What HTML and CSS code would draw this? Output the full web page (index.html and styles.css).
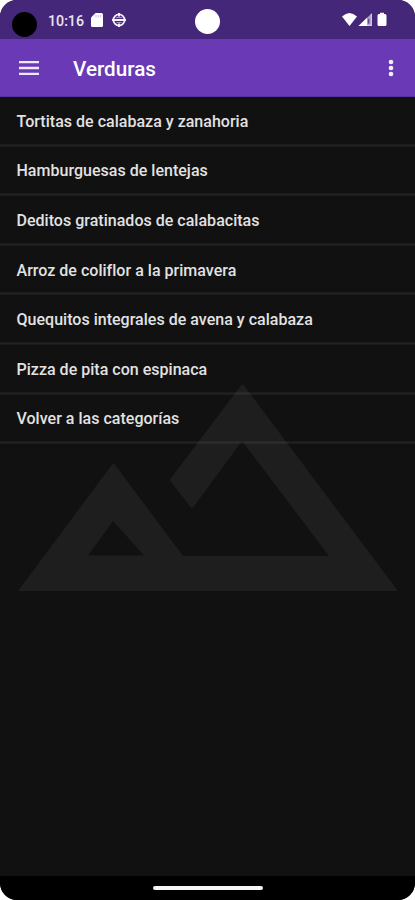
FILE: index.html
```html
<!DOCTYPE html>
<html lang="es">
<head>
<meta charset="utf-8">
<title>Verduras</title>
<link rel="stylesheet" href="styles.css">
</head>
<body>
<div class="phone">
  <header class="status">
    <span class="lens"></span>
    <span class="time">10:16</span>
    <svg class="sd" viewBox="0 0 12 14"><path d="M4.5 0H10.5Q12 0 12 1.5V12.5Q12 14 10.5 14H1.5Q0 14 0 12.5V4.5Z" fill="#fff"/><path d="M5 2v2.5M7.3 2v2.5M9.6 2v2.5" stroke="#b9adce" stroke-width=".8"/></svg>
    <svg class="globe" viewBox="0 0 14 14" fill="none" stroke="#f4effa"><circle cx="7" cy="7" r="5.600" stroke-width="1.800"/><path d="M0 7H14" stroke-width="2"/><path d="M4 4.600H10M4.500 9.500H9.500" stroke-width="1" opacity=".6"/><path d="M7 0V3.500M7 10.500V14" stroke-width="2"/></svg>
    <span class="camera"></span>
    <svg class="signals" viewBox="0 0 46 16"><path d="M0 4.500Q7.500-2.500 15 4.500L7.500 14Z" fill="#fff"/><path d="M16.500 14L30 1V14Z" fill="#a99bc4"/><path d="M16.500 14L25 5.800V14Z" fill="#fff"/><path d="M26.600 7V11.500" stroke="#5c428a" stroke-width="1.300"/><path d="M29.300 2V14M25 13.300H30" stroke="#d8d0e6" stroke-width="1.200"/><path d="M38 .800h4V2h1q1.500 0 1.500 1.500v9Q44.500 14 43 14H37q-1.500 0-1.500-1.500v-9Q35.500 2 37 2h1Z" fill="#fff"/></svg>
  </header>
  <nav class="toolbar">
    <svg class="menu" viewBox="0 0 20 14"><path d="M0 1.200H20M0 7H20M0 12.800H20" stroke="#eee6fb" stroke-width="2.300"/></svg>
    <h1>Verduras</h1>
    <svg class="more" viewBox="0 0 6 18" fill="#f4effc"><circle cx="3" cy="3" r="2.300"/><circle cx="3" cy="9" r="2.300"/><circle cx="3" cy="15" r="2.300"/></svg>
  </nav>
  <main class="content">
    <svg class="backdrop" viewBox="0 97 415 779"><path fill="#1e1e1e" fill-rule="evenodd" d="M18 591L112.500 464Q113.500 463 114.500 464L183 556H329L242 441L192 509L169.500 480L241 385.500Q242.500 383.500 244 385.500L398 591ZM113 521L88 555.500H144Z"/></svg>
    <ul class="list">
      <li>Tortitas de calabaza y zanahoria</li>
      <li>Hamburguesas de lentejas</li>
      <li>Deditos gratinados de calabacitas</li>
      <li>Arroz de coliflor a la primavera</li>
      <li>Quequitos integrales de avena y calabaza</li>
      <li>Pizza de pita con espinaca</li>
      <li>Volver a las categorías</li>
    </ul>
  </main>
  <footer class="gesture"><span></span></footer>
</div>
</body>
</html>
```
FILE: styles.css
```css
* { box-sizing: border-box; }
body { margin: 0; background: #fff; font-family: Roboto, sans-serif; }
svg { display: block; flex: none; }
.phone { width: 415px; height: 900px; border-radius: 17px; overflow: hidden; display: flex; flex-direction: column; background: #111; }
.status { height: 39px; flex: none; background: #45277a; display: flex; align-items: center; padding: 1px 27px 0 12px; }
.lens { width: 25px; height: 25px; border-radius: 50%; background: #000; margin-top: 8px; }
.time { width: 36px; margin-left: 11px; font-size: 14.200px; line-height: 18px; font-weight: 500; color: #eae4f3; white-space: nowrap; margin-top: 1px; }
.sd { width: 12px; height: 14px; margin-left: 7px; }
.globe { width: 14px; height: 14px; margin-left: 9px; }
.camera { width: 25px; height: 25px; border-radius: 50%; background: #fff; margin-left: 69px; margin-top: 2px; }
.signals { width: 46px; height: 16px; margin-left: auto; }
.toolbar { height: 58px; flex: none; background: #6939b6; border-bottom: 1px solid #5930a0; display: flex; align-items: center; padding: 0 21px 0 19px; }
.menu { width: 20px; height: 14px; }
h1 { margin: 2px 0 0 34px; font-size: 20.700px; line-height: 26px; font-weight: 500; color: #fff; }
.more { width: 6px; height: 18px; margin-left: auto; }
.content { flex: 1; position: relative; min-height: 0; }
.backdrop { position: absolute; inset: 0; width: 415px; height: 779px; }
.list { position: relative; list-style: none; margin: 0; padding: 0; transform: translateY(-.5px); }
.list li { height: 49.600px; display: flex; align-items: center; padding: 2px 16px 0 16.500px; border-bottom: 2px solid #ffffff14; font-size: 16px; letter-spacing: .02px; font-variant-ligatures: common-ligatures; line-height: 20px; font-weight: 500; color: #e2e2e2; white-space: nowrap; }
.gesture { height: 24px; flex: none; background: #000; display: flex; justify-content: center; align-items: center; }
.gesture span { width: 110px; height: 4px; border-radius: 2px; background: #f5f5f5; }
```
